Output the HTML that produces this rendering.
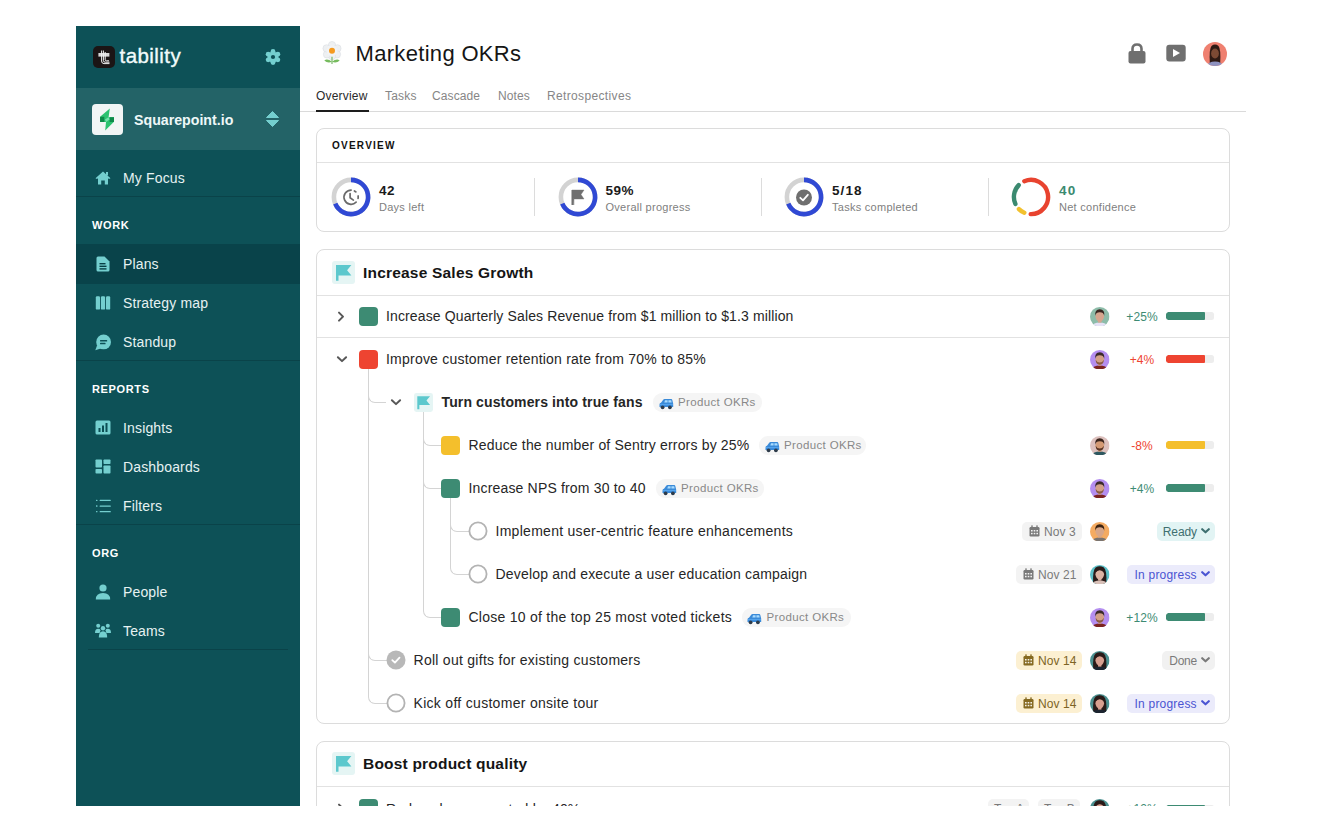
<!DOCTYPE html>
<html><head><meta charset="utf-8">
<style>
*{box-sizing:border-box;margin:0;padding:0}
html,body{width:1322px;height:819px;background:#fff;overflow:hidden;font-family:"Liberation Sans",sans-serif;color:#222}
.a{position:absolute}
.t{position:absolute;white-space:nowrap;line-height:1}
#clip{position:absolute;left:0;top:0;width:1322px;height:806px;overflow:hidden}
#side{position:absolute;left:76px;top:26px;width:224px;height:780px;background:#0d5157}
.nav{position:absolute;left:47px;font-size:14px;color:#e6f2f2;line-height:1;letter-spacing:0.15px;margin-top:-0.9px}
.lbl{position:absolute;left:16px;font-size:11px;font-weight:700;color:#fff;letter-spacing:0.65px;line-height:1;margin-top:-0.7px}
.ico{position:absolute;left:18px}
.div{position:absolute;left:0;width:224px;height:1px;background:#0a4349}
.card{position:absolute;left:316px;width:914px;border:1px solid #dcdcdc;border-radius:8px;background:#fff}
.hr{position:absolute;height:1px;background:#e2e2e2}
.rt{position:absolute;font-size:14px;color:#262626;line-height:1;white-space:nowrap;letter-spacing:0.15px}
.sq{position:absolute;width:19px;height:19px;border-radius:4px}
.pill{position:absolute;height:19px;border-radius:9px;background:#f5f5f5;font-size:11.5px;color:#888;line-height:19px;white-space:nowrap;padding-left:25px;letter-spacing:0.35px}
.pct{position:absolute;width:40px;text-align:center;font-size:12px;line-height:1}
.bar{position:absolute;left:1166px;width:48px;height:8px;border-radius:2.5px;background:#ededed;overflow:hidden}
.bar i{position:absolute;left:0;top:0;height:8px;width:39px;border-radius:2.5px 1px 1px 2.5px}
.av{position:absolute;left:1090px;width:20px;height:20px;border-radius:50%;overflow:hidden}
.date{position:absolute;height:19px;border-radius:5px;background:#f3f3f3;font-size:12px;color:#7a7a7a;line-height:19px;white-space:nowrap}
.st{position:absolute;height:19px;border-radius:5px;font-size:12px;line-height:19px;white-space:nowrap}
.line{position:absolute;border-color:#d4d4d4;border-style:solid;border-width:0}
</style></head><body>
<div id="clip">
<!-- SIDEBAR -->
<div id="side">
  <!-- logo -->
  <div class="a" style="left:16.5px;top:20px;width:22px;height:22px;border-radius:5px;background:#1b1515"></div>
  <svg class="a" style="left:16.5px;top:20px" width="22" height="22" viewBox="0 0 22 22">
    <rect x="5.4" y="7" width="11" height="3.6" fill="#d8d8d8"/>
    <path d="M8.6 4.5 V15 Q8.6 17.6 11 17.6 H16.5 M10.4 4.5 V14.5 Q10.4 16.2 12.2 16.2 H16.5 M12.2 6 V13.8 Q12.2 14.8 13.4 14.8 H16" stroke="#f0f0f0" stroke-width="1" fill="none"/>
  </svg>
  <div class="t" style="left:43.5px;top:20px;font-size:20.5px;color:#f2fbfb;letter-spacing:0.45px;-webkit-text-stroke:0.35px #f2fbfb">tability</div>
  <svg class="a" style="left:189px;top:23px" width="16" height="16" viewBox="0 0 16 16"><g fill="#74d0d0"><circle cx="8" cy="8" r="5.6"/><circle cx="8.00" cy="2.40" r="2.4"/><circle cx="12.85" cy="5.20" r="2.4"/><circle cx="12.85" cy="10.80" r="2.4"/><circle cx="8.00" cy="13.60" r="2.4"/><circle cx="3.15" cy="10.80" r="2.4"/><circle cx="3.15" cy="5.20" r="2.4"/></g><circle cx="8" cy="8" r="2.1" fill="#0d5157"/></svg>
  <!-- workspace -->
  <div class="a" style="left:0;top:62px;width:224px;height:62px;background:#236367"></div>
  <div class="a" style="left:16px;top:78px;width:30.5px;height:30.5px;border-radius:4px;background:#f1f5f5"></div>
  <svg class="a" style="left:16px;top:78px" width="31" height="31" viewBox="0 0 31 31">
    <path d="M17.8 4.4 L8.1 12.8 V18 H14 L13.2 26.4 L22 17.8 V13.2 H16.6 Z" fill="#2cc271"/>
    <rect x="8.1" y="12.8" width="4.2" height="5.2" fill="#0d8a4a"/>
    <rect x="17.6" y="13.2" width="4.4" height="4.8" fill="#0d8a4a"/>
    <path d="M16.6 13.2 L13 15.6 L14 18 L17.6 15.6Z" fill="#74e3ad"/>
  </svg>
  <div class="t" style="left:58px;top:87px;font-size:14.2px;font-weight:700;color:#eef8f8">Squarepoint.io</div>
  <svg class="a" style="left:190px;top:85px" width="13" height="16" viewBox="0 0 13 16">
    <path d="M6.5 0.5 L12.5 6.5 H0.5Z M6.5 15.5 L12.5 9.5 H0.5Z" fill="#74cfcf" stroke="#74cfcf" stroke-linejoin="round" stroke-width="1"/>
  </svg>
  <!-- nav -->
  <svg class="ico" style="left:19px;top:145px" width="16" height="14" viewBox="0 0 16 14">
    <path d="M8 0.5 L15.5 7.2 L14 8 L13 7.2 V13.5 H9.8 V9.5 H6.2 V13.5 H3 V7.2 L2 8 L0.5 7.2Z" fill="#74cfcf"/>
    <rect x="11" y="1" width="2" height="3.5" fill="#74cfcf"/>
  </svg>
  <div class="nav" style="top:146px">My Focus</div>
  <div class="div" style="top:170px"></div>
  <div class="lbl" style="top:195px">WORK</div>
  <div class="a" style="left:0;top:218px;width:224px;height:40px;background:#09434a"></div>
  <svg class="ico" style="left:20px;top:230px" width="14" height="16" viewBox="0 0 14 16">
    <path d="M2 0.5 H8.5 L13.5 5.5 V14 Q13.5 15.5 12 15.5 H2 Q0.5 15.5 0.5 14 V2 Q0.5 0.5 2 0.5Z" fill="#74cfcf"/>
    <rect x="3.5" y="7" width="6" height="1.4" fill="#083f45"/><rect x="3.5" y="9.6" width="7" height="1.4" fill="#083f45"/><rect x="3.5" y="12.2" width="7" height="1.4" fill="#083f45"/>
  </svg>
  <div class="nav" style="top:232px">Plans</div>
  <svg class="ico" style="left:19px;top:270px" width="16" height="14" viewBox="0 0 16 14">
    <rect x="0.8" y="0.3" width="4.2" height="13.3" rx="1.2" fill="#74cfcf"/><rect x="5.9" y="0.3" width="4.2" height="13.3" rx="1.2" fill="#74cfcf"/><rect x="11" y="0.3" width="4.2" height="13.3" rx="1.2" fill="#74cfcf"/>
  </svg>
  <div class="nav" style="top:271px">Strategy map</div>
  <svg class="ico" style="left:19px;top:307.5px" width="17" height="17" viewBox="0 0 17 17">
    <circle cx="8.6" cy="7.9" r="7.4" fill="#74cfcf"/><path d="M0.3 16.2 L2.2 11 L5.8 14.6Z" fill="#74cfcf"/>
    <rect x="5" y="6" width="7.2" height="1.5" rx="0.6" fill="#0d5157"/><rect x="5" y="8.8" width="5.6" height="1.5" rx="0.6" fill="#0d5157"/>
  </svg>
  <div class="nav" style="top:310px">Standup</div>
  <div class="div" style="top:334px"></div>
  <div class="lbl" style="top:359px">REPORTS</div>
  <svg class="ico" style="left:19px;top:394px" width="16" height="15" viewBox="0 0 16 15">
    <rect x="0.5" y="0.5" width="15" height="14" rx="1.5" fill="#74cfcf"/>
    <rect x="3.5" y="8" width="2" height="4" fill="#0c4e54"/><rect x="7" y="5.5" width="2" height="6.5" fill="#0c4e54"/><rect x="10.5" y="3" width="2" height="9" fill="#0c4e54"/>
  </svg>
  <div class="nav" style="top:396px">Insights</div>
  <svg class="ico" style="left:19px;top:433px" width="16" height="15" viewBox="0 0 16 15">
    <rect x="0.5" y="0.5" width="6.5" height="8" rx="0.8" fill="#74cfcf"/><rect x="0.5" y="10" width="6.5" height="4.5" rx="0.8" fill="#74cfcf"/>
    <rect x="8.5" y="0.5" width="7" height="4.5" rx="0.8" fill="#74cfcf"/><rect x="8.5" y="6.5" width="7" height="8" rx="0.8" fill="#74cfcf"/>
  </svg>
  <div class="nav" style="top:435px">Dashboards</div>
  <svg class="ico" style="left:19px;top:473px" width="16" height="14" viewBox="0 0 16 14">
    <g fill="#74cfcf"><rect x="1" y="0.7" width="1.5" height="1.4" rx="0.5"/><rect x="4.6" y="0.8" width="11.2" height="1.3" rx="0.5"/>
    <rect x="1" y="6.3" width="1.5" height="1.4" rx="0.5"/><rect x="4.6" y="6.4" width="11.2" height="1.3" rx="0.5"/>
    <rect x="1" y="11.9" width="1.5" height="1.4" rx="0.5"/><rect x="4.6" y="12" width="11.2" height="1.3" rx="0.5"/></g>
  </svg>
  <div class="nav" style="top:474px">Filters</div>
  <div class="div" style="top:498px"></div>
  <div class="lbl" style="top:523px">ORG</div>
  <svg class="ico" style="left:19px;top:558px" width="16" height="16" viewBox="0 0 16 16">
    <circle cx="8" cy="4" r="3.6" fill="#74cfcf"/><path d="M0.8 15.5 Q0.8 9 8 9 Q15.2 9 15.2 15.5Z" fill="#74cfcf"/>
  </svg>
  <div class="nav" style="top:560px">People</div>
  <svg class="ico" style="left:19px;top:597px" width="16" height="15" viewBox="0 0 16 15">
    <g fill="#74cfcf"><circle cx="3.2" cy="2.8" r="2"/><circle cx="12.8" cy="2.8" r="2"/><circle cx="8" cy="5.2" r="2.2"/>
    <path d="M0 10 Q0 5.8 3.2 5.8 Q5 5.8 5.6 7.2 L4.6 10Z"/><path d="M16 10 Q16 5.8 12.8 5.8 Q11 5.8 10.4 7.2 L11.4 10Z"/>
    <path d="M3.8 14.5 Q3.8 8.2 8 8.2 Q12.2 8.2 12.2 14.5Z"/></g>
  </svg>
  <div class="nav" style="top:599px">Teams</div>
  <div class="a" style="left:12px;top:623px;width:200px;height:1px;background:#0a4349"></div>
</div>

<!-- HEADER -->

<!-- HEADER -->
<svg class="a" style="left:321.5px;top:41px" width="20" height="24" viewBox="1 0 22 26" preserveAspectRatio="none">
  <g fill="#eef0f2" stroke="#d9dde2" stroke-width="0.6">
    <circle cx="12" cy="4.5" r="4"/><circle cx="18" cy="8" r="4"/><circle cx="17.5" cy="14.5" r="4"/>
    <circle cx="12" cy="16.5" r="4"/><circle cx="6.5" cy="14.5" r="4"/><circle cx="6" cy="8" r="4"/>
  </g>
  <circle cx="12" cy="10.5" r="6" fill="#f1f3f5"/>
  <circle cx="12" cy="10.5" r="3.3" fill="#f59a1f"/>
  <path d="M12 17 V25" stroke="#6db35a" stroke-width="1.2"/>
  <path d="M12 22.5 Q7 18.5 3.5 21 Q7 24.5 12 22.5Z M12 22.5 Q17 18.5 20.5 21 Q17 24.5 12 22.5Z" fill="#76bb5e"/>
</svg>
<div class="t" style="left:355.5px;top:42.7px;font-size:22px;color:#151515;letter-spacing:0.32px">Marketing OKRs</div>
<div class="t" style="left:316px;top:90px;font-size:12px;color:#2a2a2a;letter-spacing:0.2px">Overview</div>
<div class="t" style="left:385px;top:90px;font-size:12px;color:#868686;letter-spacing:0.2px">Tasks</div>
<div class="t" style="left:432px;top:90px;font-size:12px;color:#868686;letter-spacing:0.1px">Cascade</div>
<div class="t" style="left:498px;top:90px;font-size:12px;color:#868686;letter-spacing:0.1px">Notes</div>
<div class="t" style="left:547px;top:90px;font-size:12px;color:#868686;letter-spacing:0.35px">Retrospectives</div>
<div class="a" style="left:300px;top:111px;width:946px;height:1px;background:#dadada"></div>
<div class="a" style="left:316px;top:110px;width:53px;height:2px;background:#1d1d1d"></div>
<svg class="a" style="left:1128px;top:43px" width="18" height="21" viewBox="0 0 18 21">
  <path d="M4.5 9 V5.8 Q4.5 1.5 9 1.5 Q13.5 1.5 13.5 5.8 V9" stroke="#6f6f6f" stroke-width="2.6" fill="none"/>
  <rect x="0.5" y="8" width="17" height="12.5" rx="2" fill="#6f6f6f"/>
</svg>
<svg class="a" style="left:1166px;top:44px" width="20" height="18" viewBox="0 0 20 18">
  <rect x="0.3" y="0.8" width="19.4" height="16.6" rx="3" fill="#6f6f6f"/>
  <path d="M7 5 L14 9 L7 13Z" fill="#fff"/>
</svg>
<svg class="a" style="left:1203px;top:41.5px" width="24" height="24" viewBox="0 0 24 24">
  <defs><clipPath id="cav0"><circle cx="12" cy="12" r="12"/></clipPath></defs>
  <g clip-path="url(#cav0)">
  <rect width="24" height="24" fill="#ef8070"/>
  <path d="M6.8 21 Q6 7 8.5 4 Q12 1.2 15.5 4 Q18 7 17.2 21Z" fill="#2e1a14"/>
  <ellipse cx="12" cy="11.5" rx="3.9" ry="5" fill="#7c4a34"/>
  <path d="M3 26 Q4 19.5 12 19.5 Q20 19.5 21 26Z" fill="#8e92c0"/>
  </g>
</svg>
<!--BODY-->
<div class="card" style="top:128px;height:104px"></div>
<div class="t" style="left:332px;top:140.5px;font-size:10px;font-weight:700;color:#111;letter-spacing:1.25px">OVERVIEW</div>
<div class="hr" style="left:317px;top:161.5px;width:912px"></div>
<svg class="a" style="left:330px;top:176.3px" width="42" height="42" viewBox="0 0 42 42"><circle cx="21" cy="21" r="17.1" stroke="#d3d3d3" stroke-width="4.6" fill="none"/><path d="M21.00 3.90 A17.1 17.1 0 1 1 5.26 27.68" stroke="#3049d4" stroke-width="4.6" fill="none"/><path d="M26.12 26.22 A7.1 7.1 0 1 1 21.10 14.10" stroke="#6a6a6a" stroke-width="1.7" fill="none" stroke-linecap="round"/><path d="M24.43 14.93 A7.1 7.1 0 0 1 25.85 15.92" stroke="#6a6a6a" stroke-width="1.7" fill="none" stroke-linecap="round"/><path d="M28.09 19.97 A7.1 7.1 0 0 1 28.09 22.43" stroke="#6a6a6a" stroke-width="1.7" fill="none" stroke-linecap="round"/><path d="M20.1 17.6 V21.8 L23.4 24.1" stroke="#6a6a6a" stroke-width="1.7" fill="none" stroke-linecap="round" stroke-linejoin="round"/></svg>
<div class="t" style="left:379px;top:183.6px;font-size:13.5px;font-weight:700;color:#1a1a1a;letter-spacing:0.6px">42</div>
<div class="t" style="left:379px;top:202px;font-size:11px;color:#808080;letter-spacing:0.27px">Days left</div>
<svg class="a" style="left:556.5px;top:176.3px" width="42" height="42" viewBox="0 0 42 42"><circle cx="21" cy="21" r="17.1" stroke="#d3d3d3" stroke-width="4.6" fill="none"/><path d="M21.00 3.90 A17.1 17.1 0 1 1 5.26 27.68" stroke="#3049d4" stroke-width="4.6" fill="none"/><path d="M15 14 H27 L24 18.5 L27 23 H17 V29" fill="#6f6f6f" stroke="#6f6f6f" stroke-width="0.4"/><rect x="14.5" y="14" width="2.2" height="15" fill="#6f6f6f"/></svg>
<div class="t" style="left:605.5px;top:183.6px;font-size:13.5px;font-weight:700;color:#1a1a1a;letter-spacing:0.5px">59%</div>
<div class="t" style="left:605.5px;top:202px;font-size:11px;color:#808080;letter-spacing:0.27px">Overall progress</div>
<svg class="a" style="left:783px;top:176.3px" width="42" height="42" viewBox="0 0 42 42"><circle cx="21" cy="21" r="17.1" stroke="#d3d3d3" stroke-width="4.6" fill="none"/><path d="M21.00 3.90 A17.1 17.1 0 1 1 5.26 27.68" stroke="#3049d4" stroke-width="4.6" fill="none"/><circle cx="21" cy="21.5" r="8" fill="#6f6f6f"/><path d="M17.3 21.8 L20 24.3 L24.8 18.8" stroke="#fff" stroke-width="1.8" fill="none" stroke-linecap="round" stroke-linejoin="round"/></svg>
<div class="t" style="left:832px;top:183.6px;font-size:13.5px;font-weight:700;color:#1a1a1a;letter-spacing:1.1px">5/18</div>
<div class="t" style="left:832px;top:202px;font-size:11px;color:#808080;letter-spacing:0.27px">Tasks completed</div>
<svg class="a" style="left:1010px;top:176.3px" width="42" height="42" viewBox="0 0 42 42"><path d="M14.32 5.26 A17.1 17.1 0 1 1 20.70 38.10" stroke="#e8432f" stroke-width="4.4" fill="none" stroke-linecap="round"/><path d="M14.32 36.74 A17.1 17.1 0 0 1 8.91 33.09" stroke="#f2c12e" stroke-width="4.4" fill="none" stroke-linecap="round"/><path d="M5.38 27.96 A17.1 17.1 0 0 1 8.70 9.12" stroke="#3b8a70" stroke-width="4.4" fill="none" stroke-linecap="round"/></svg>
<div class="t" style="left:1059px;top:183.6px;font-size:13.5px;font-weight:700;color:#3b8a70;letter-spacing:1.2px">40</div>
<div class="t" style="left:1059px;top:202px;font-size:11px;color:#808080;letter-spacing:0.27px">Net confidence</div>
<div class="a" style="left:534px;top:178px;width:1px;height:38px;background:#dcdcdc"></div>
<div class="a" style="left:761px;top:178px;width:1px;height:38px;background:#dcdcdc"></div>
<div class="a" style="left:987.5px;top:178px;width:1px;height:38px;background:#dcdcdc"></div>
<div class="card" style="top:248.5px;height:475.5px"></div>
<svg class="a" style="left:332px;top:260.5px" width="23" height="23" viewBox="0 0 23 23"><rect width="23" height="23" rx="3" fill="#e5f5f4"/><path d="M4 4 H19.4 L15.1 9.2 L19.4 14.4 H6.5 V19.8 H4 Z" fill="#5cc8cd"/></svg>
<div class="t" style="left:363px;top:264.6px;font-size:15.5px;font-weight:700;color:#151515;letter-spacing:0.2px">Increase Sales Growth</div>
<div class="hr" style="left:317px;top:294.5px;width:912px"></div>
<div class="hr" style="left:317px;top:337px;width:912px"></div>
<div class="line" style="left:368px;top:368.4px;width:18px;height:34.5px;border-left-width:1px;border-bottom-width:1px;border-bottom-left-radius:7px"></div>
<div class="line" style="left:368px;top:368.4px;width:19px;height:292.5px;border-left-width:1px;border-bottom-width:1px;border-bottom-left-radius:7px"></div>
<div class="line" style="left:368px;top:368.4px;width:19px;height:335.5px;border-left-width:1px;border-bottom-width:1px;border-bottom-left-radius:7px"></div>
<div class="line" style="left:423px;top:411.4px;width:18px;height:34.5px;border-left-width:1px;border-bottom-width:1px;border-bottom-left-radius:7px"></div>
<div class="line" style="left:423px;top:411.4px;width:18px;height:77.5px;border-left-width:1px;border-bottom-width:1px;border-bottom-left-radius:7px"></div>
<div class="line" style="left:423px;top:411.4px;width:18px;height:206.5px;border-left-width:1px;border-bottom-width:1px;border-bottom-left-radius:7px"></div>
<div class="line" style="left:450px;top:497.4px;width:19px;height:34.5px;border-left-width:1px;border-bottom-width:1px;border-bottom-left-radius:7px"></div>
<div class="line" style="left:450px;top:497.4px;width:19px;height:77.5px;border-left-width:1px;border-bottom-width:1px;border-bottom-left-radius:7px"></div>
<svg class="a" style="left:337px;top:310.9px" width="8" height="12" viewBox="0 0 8 12"><path d="M2 1.6 L6 5.6 L2 9.6" stroke="#575757" stroke-width="2" fill="none" stroke-linecap="round" stroke-linejoin="round"/></svg>
<div class="sq" style="left:359px;top:306.9px;background:#3d8b73"></div>
<div class="rt" style="left:386px;top:309.15px;letter-spacing:0.13px">Increase Quarterly Sales Revenue from $1 million to $1.3 million</div>
<svg class="a" style="left:1090.25px;top:306.65px" width="19.5" height="19.5" viewBox="0 0 20 20"><defs><clipPath id="c1100_3164"><circle cx="10" cy="10" r="10"/></clipPath></defs><g clip-path="url(#c1100_3164)"><rect width="20" height="20" fill="#8dbca9"/><path d="M1.5 21 Q2 16 10 15.8 Q18 16 18.5 21Z" fill="#e6e2f6"/><rect x="8.3" y="12" width="3.4" height="4" fill="#d6a58e"/><ellipse cx="10" cy="9.6" rx="4.4" ry="5.4" fill="#d6a58e"/><path d="M5.4 9 Q4.6 2.4 10 2.2 Q15.4 2.4 14.6 9 Q13.8 5.4 10 5.5 Q6.2 5.4 5.4 9Z" fill="#3a2620"/></g></svg>
<div class="pct" style="left:1122px;top:310.59999999999997px;color:#3d8b73;letter-spacing:0.1px">+25%</div>
<div class="bar" style="top:312.4px"><i style="background:#3d8b73"></i></div>
<svg class="a" style="left:335.5px;top:355.4px" width="12" height="8" viewBox="0 0 12 8"><path d="M1.9 2.2 L6 6.1 L10.1 2.2" stroke="#575757" stroke-width="2" fill="none" stroke-linecap="round" stroke-linejoin="round"/></svg>
<div class="sq" style="left:359px;top:349.9px;background:#ee4431"></div>
<div class="rt" style="left:386px;top:352.15px;letter-spacing:0.22px">Improve customer retention rate from 70% to 85%</div>
<svg class="a" style="left:1090.25px;top:349.65px" width="19.5" height="19.5" viewBox="0 0 20 20"><defs><clipPath id="c1100_3594"><circle cx="10" cy="10" r="10"/></clipPath></defs><g clip-path="url(#c1100_3594)"><rect width="20" height="20" fill="#b48ef0"/><path d="M1.5 21 Q2 16 10 15.8 Q18 16 18.5 21Z" fill="#7c2420"/><rect x="8.3" y="12" width="3.4" height="4" fill="#d2a088"/><ellipse cx="10" cy="9.6" rx="4.4" ry="5.4" fill="#d2a088"/><path d="M5.8 10 Q6 15 10 15.1 Q14 15 14.2 10 Q13 12.8 10 12.8 Q7 12.8 5.8 10Z" fill="#8a5a48"/><path d="M5.4 9 Q4.6 2.4 10 2.2 Q15.4 2.4 14.6 9 Q13.8 5.4 10 5.5 Q6.2 5.4 5.4 9Z" fill="#3a2a28"/></g></svg>
<div class="pct" style="left:1122px;top:353.59999999999997px;color:#ee4431;letter-spacing:0.1px">+4%</div>
<div class="bar" style="top:355.4px"><i style="background:#ee4431"></i></div>
<svg class="a" style="left:390px;top:398.4px" width="12" height="8" viewBox="0 0 12 8"><path d="M1.9 2.2 L6 6.1 L10.1 2.2" stroke="#575757" stroke-width="2" fill="none" stroke-linecap="round" stroke-linejoin="round"/></svg>
<svg class="a" style="left:413.5px;top:392.9px" width="19" height="19" viewBox="0 0 23 23"><rect width="23" height="23" rx="3" fill="#e5f5f4"/><path d="M4 4 H19.4 L15.1 9.2 L19.4 14.4 H6.5 V19.8 H4 Z" fill="#5cc8cd"/></svg>
<div class="rt" style="left:441.5px;top:395.15px;font-weight:700;letter-spacing:0.13px">Turn customers into true fans</div>
<div class="pill" style="left:653px;top:392.9px;width:109px">Product OKRs</div><svg class="a" style="left:658.5px;top:398.4px" width="15" height="12" viewBox="0 0 15 12"><path d="M0.5 9 V6.6 Q0.5 5 2 4.8 L4.2 1.8 Q4.7 1 5.6 1 H12.2 Q13.1 1 13.3 2 L13.9 4.6 Q14.2 5.2 14.2 6.2 V9 Z" fill="#3a8ad8"/><path d="M5.3 4.6 L6 2.2 H8.6 V4.6Z M9.4 2.2 H12.2 L12.7 4.6 H9.4Z" fill="#a9dcff"/><rect x="1" y="6.2" width="12.8" height="0.9" fill="#5aaaf0"/><circle cx="3.6" cy="9.3" r="1.9" fill="#2d3b4a"/><circle cx="10.9" cy="9.3" r="1.9" fill="#2d3b4a"/></svg>
<div class="sq" style="left:441px;top:435.9px;background:#f4bf2c"></div>
<div class="rt" style="left:468.5px;top:438.15px;letter-spacing:0.17px">Reduce the number of Sentry errors by 25%</div>
<div class="pill" style="left:759px;top:435.9px;width:107px">Product OKRs</div><svg class="a" style="left:764.5px;top:441.4px" width="15" height="12" viewBox="0 0 15 12"><path d="M0.5 9 V6.6 Q0.5 5 2 4.8 L4.2 1.8 Q4.7 1 5.6 1 H12.2 Q13.1 1 13.3 2 L13.9 4.6 Q14.2 5.2 14.2 6.2 V9 Z" fill="#3a8ad8"/><path d="M5.3 4.6 L6 2.2 H8.6 V4.6Z M9.4 2.2 H12.2 L12.7 4.6 H9.4Z" fill="#a9dcff"/><rect x="1" y="6.2" width="12.8" height="0.9" fill="#5aaaf0"/><circle cx="3.6" cy="9.3" r="1.9" fill="#2d3b4a"/><circle cx="10.9" cy="9.3" r="1.9" fill="#2d3b4a"/></svg>
<svg class="a" style="left:1090.25px;top:435.65px" width="19.5" height="19.5" viewBox="0 0 20 20"><defs><clipPath id="c1100_4454"><circle cx="10" cy="10" r="10"/></clipPath></defs><g clip-path="url(#c1100_4454)"><rect width="20" height="20" fill="#dcc0bd"/><path d="M1.5 21 Q2 16 10 15.8 Q18 16 18.5 21Z" fill="#2e5860"/><rect x="8.3" y="12" width="3.4" height="4" fill="#d49a74"/><ellipse cx="10" cy="9.6" rx="4.4" ry="5.4" fill="#d49a74"/><path d="M5.8 10 Q6 15 10 15.1 Q14 15 14.2 10 Q13 12.8 10 12.8 Q7 12.8 5.8 10Z" fill="#5a3424"/><path d="M5.4 9 Q4.6 2.4 10 2.2 Q15.4 2.4 14.6 9 Q13.8 5.4 10 5.5 Q6.2 5.4 5.4 9Z" fill="#3a241c"/></g></svg>
<div class="pct" style="left:1122px;top:439.59999999999997px;color:#ee4431;letter-spacing:0.1px">-8%</div>
<div class="bar" style="top:441.4px"><i style="background:#f4bf2c"></i></div>
<div class="sq" style="left:441px;top:478.9px;background:#3d8b73"></div>
<div class="rt" style="left:468.5px;top:481.15px;letter-spacing:0.17px">Increase NPS from 30 to 40</div>
<div class="pill" style="left:656px;top:478.9px;width:108px">Product OKRs</div><svg class="a" style="left:661.5px;top:484.4px" width="15" height="12" viewBox="0 0 15 12"><path d="M0.5 9 V6.6 Q0.5 5 2 4.8 L4.2 1.8 Q4.7 1 5.6 1 H12.2 Q13.1 1 13.3 2 L13.9 4.6 Q14.2 5.2 14.2 6.2 V9 Z" fill="#3a8ad8"/><path d="M5.3 4.6 L6 2.2 H8.6 V4.6Z M9.4 2.2 H12.2 L12.7 4.6 H9.4Z" fill="#a9dcff"/><rect x="1" y="6.2" width="12.8" height="0.9" fill="#5aaaf0"/><circle cx="3.6" cy="9.3" r="1.9" fill="#2d3b4a"/><circle cx="10.9" cy="9.3" r="1.9" fill="#2d3b4a"/></svg>
<svg class="a" style="left:1090.25px;top:478.65px" width="19.5" height="19.5" viewBox="0 0 20 20"><defs><clipPath id="c1100_4884"><circle cx="10" cy="10" r="10"/></clipPath></defs><g clip-path="url(#c1100_4884)"><rect width="20" height="20" fill="#b48ef0"/><path d="M1.5 21 Q2 16 10 15.8 Q18 16 18.5 21Z" fill="#7c2420"/><rect x="8.3" y="12" width="3.4" height="4" fill="#d2a088"/><ellipse cx="10" cy="9.6" rx="4.4" ry="5.4" fill="#d2a088"/><path d="M5.8 10 Q6 15 10 15.1 Q14 15 14.2 10 Q13 12.8 10 12.8 Q7 12.8 5.8 10Z" fill="#8a5a48"/><path d="M5.4 9 Q4.6 2.4 10 2.2 Q15.4 2.4 14.6 9 Q13.8 5.4 10 5.5 Q6.2 5.4 5.4 9Z" fill="#3a2a28"/></g></svg>
<div class="pct" style="left:1122px;top:482.59999999999997px;color:#3d8b73;letter-spacing:0.1px">+4%</div>
<div class="bar" style="top:484.4px"><i style="background:#3d8b73"></i></div>
<svg class="a" style="left:467.5px;top:521.4px" width="20" height="20" viewBox="0 0 20 20"><circle cx="10" cy="10" r="8.6" stroke="#b3b3b3" stroke-width="1.8" fill="#fff"/></svg>
<div class="rt" style="left:495.5px;top:524.15px;letter-spacing:0.28px">Implement user-centric feature enhancements</div>
<div class="date" style="left:1022px;top:521.9px;width:60px;background:#f3f3f3"></div><svg class="a" style="left:1028.5px;top:525.4px" width="11" height="12" viewBox="0 0 11 12"><rect x="0.5" y="2" width="10" height="9.5" rx="1.2" fill="#7a7a7a"/><rect x="2.3" y="0.3" width="1.4" height="3" rx="0.5" fill="#7a7a7a"/><rect x="7.3" y="0.3" width="1.4" height="3" rx="0.5" fill="#7a7a7a"/><g fill="#fff" opacity="0.9"><rect x="2" y="5" width="1.6" height="1.5"/><rect x="4.7" y="5" width="1.6" height="1.5"/><rect x="7.4" y="5" width="1.6" height="1.5"/><rect x="2" y="7.8" width="1.6" height="1.5"/><rect x="4.7" y="7.8" width="1.6" height="1.5"/><rect x="7.4" y="7.8" width="1.6" height="1.5"/></g></svg><div class="t" style="left:1044px;top:525.6px;font-size:12px;color:#7a7a7a;letter-spacing:0.08px">Nov 3</div>
<svg class="a" style="left:1090.25px;top:521.65px" width="19.5" height="19.5" viewBox="0 0 20 20"><defs><clipPath id="c1100_5314"><circle cx="10" cy="10" r="10"/></clipPath></defs><g clip-path="url(#c1100_5314)"><rect width="20" height="20" fill="#f4ab62"/><path d="M1.5 21 Q2 16 10 15.8 Q18 16 18.5 21Z" fill="#7a7470"/><rect x="8.3" y="12" width="3.4" height="4" fill="#d8a688"/><ellipse cx="10" cy="9.6" rx="4.4" ry="5.4" fill="#d8a688"/><path d="M5.4 9 Q4.6 2.4 10 2.2 Q15.4 2.4 14.6 9 Q13.8 5.4 10 5.5 Q6.2 5.4 5.4 9Z" fill="#3a2212"/></g></svg>
<div class="st" style="left:1156.5px;top:521.9px;width:58.5px;background:#e2f4f4"></div><div class="t" style="left:1156.5px;width:40.299999999999955px;text-align:right;top:525.6px;font-size:12px;color:#3e6f70;letter-spacing:-0.15px">Ready</div><svg class="a" style="left:1201px;top:528.4px" width="9" height="6" viewBox="0 0 9 6"><path d="M1.2 1.2 L4.5 4.3 L7.8 1.2" stroke="#3e6f70" stroke-width="2.1" fill="none" stroke-linecap="round" stroke-linejoin="round"/></svg>
<svg class="a" style="left:467.5px;top:564.4px" width="20" height="20" viewBox="0 0 20 20"><circle cx="10" cy="10" r="8.6" stroke="#b3b3b3" stroke-width="1.8" fill="#fff"/></svg>
<div class="rt" style="left:495.5px;top:567.15px;letter-spacing:0.18px">Develop and execute a user education campaign</div>
<div class="date" style="left:1016px;top:564.9px;width:66px;background:#f3f3f3"></div><svg class="a" style="left:1022.5px;top:568.4px" width="11" height="12" viewBox="0 0 11 12"><rect x="0.5" y="2" width="10" height="9.5" rx="1.2" fill="#7a7a7a"/><rect x="2.3" y="0.3" width="1.4" height="3" rx="0.5" fill="#7a7a7a"/><rect x="7.3" y="0.3" width="1.4" height="3" rx="0.5" fill="#7a7a7a"/><g fill="#fff" opacity="0.9"><rect x="2" y="5" width="1.6" height="1.5"/><rect x="4.7" y="5" width="1.6" height="1.5"/><rect x="7.4" y="5" width="1.6" height="1.5"/><rect x="2" y="7.8" width="1.6" height="1.5"/><rect x="4.7" y="7.8" width="1.6" height="1.5"/><rect x="7.4" y="7.8" width="1.6" height="1.5"/></g></svg><div class="t" style="left:1038px;top:568.6px;font-size:12px;color:#7a7a7a;letter-spacing:0.08px">Nov 21</div>
<svg class="a" style="left:1090.25px;top:564.65px" width="19.5" height="19.5" viewBox="0 0 20 20"><defs><clipPath id="c1100_5744"><circle cx="10" cy="10" r="10"/></clipPath></defs><g clip-path="url(#c1100_5744)"><rect width="20" height="20" fill="#5cc0c8"/><path d="M3.2 19 Q2.6 5 5.8 2.6 Q10 0 14.2 2.6 Q17.4 5 16.8 19Z" fill="#2a1c1a"/><path d="M1.5 21 Q2 16 10 15.8 Q18 16 18.5 21Z" fill="#d8c0b8"/><rect x="8.3" y="12" width="3.4" height="4" fill="#dcb4a4"/><ellipse cx="10" cy="9.6" rx="4.4" ry="5.4" fill="#dcb4a4"/><path d="M5.6 8 Q5.8 3 10 2.8 Q14.2 3 14.4 8 Q12.4 5.2 10 5.3 Q7.6 5.2 5.6 8Z" fill="#2a1c1a"/></g></svg>
<div class="st" style="left:1127px;top:564.9px;width:88px;background:#ebebfb"></div><div class="t" style="left:1127px;width:69.79999999999995px;text-align:right;top:568.6px;font-size:12px;color:#4a54d2;letter-spacing:0.2px">In progress</div><svg class="a" style="left:1201px;top:571.4px" width="9" height="6" viewBox="0 0 9 6"><path d="M1.2 1.2 L4.5 4.3 L7.8 1.2" stroke="#4a54d2" stroke-width="2.1" fill="none" stroke-linecap="round" stroke-linejoin="round"/></svg>
<div class="sq" style="left:441px;top:607.9px;background:#3d8b73"></div>
<div class="rt" style="left:468.5px;top:610.15px;letter-spacing:0.26px">Close 10 of the top 25 most voted tickets</div>
<div class="pill" style="left:741.5px;top:607.9px;width:109.5px">Product OKRs</div><svg class="a" style="left:747.0px;top:613.4px" width="15" height="12" viewBox="0 0 15 12"><path d="M0.5 9 V6.6 Q0.5 5 2 4.8 L4.2 1.8 Q4.7 1 5.6 1 H12.2 Q13.1 1 13.3 2 L13.9 4.6 Q14.2 5.2 14.2 6.2 V9 Z" fill="#3a8ad8"/><path d="M5.3 4.6 L6 2.2 H8.6 V4.6Z M9.4 2.2 H12.2 L12.7 4.6 H9.4Z" fill="#a9dcff"/><rect x="1" y="6.2" width="12.8" height="0.9" fill="#5aaaf0"/><circle cx="3.6" cy="9.3" r="1.9" fill="#2d3b4a"/><circle cx="10.9" cy="9.3" r="1.9" fill="#2d3b4a"/></svg>
<svg class="a" style="left:1090.25px;top:607.65px" width="19.5" height="19.5" viewBox="0 0 20 20"><defs><clipPath id="c1100_6174"><circle cx="10" cy="10" r="10"/></clipPath></defs><g clip-path="url(#c1100_6174)"><rect width="20" height="20" fill="#b48ef0"/><path d="M1.5 21 Q2 16 10 15.8 Q18 16 18.5 21Z" fill="#7c2420"/><rect x="8.3" y="12" width="3.4" height="4" fill="#d2a088"/><ellipse cx="10" cy="9.6" rx="4.4" ry="5.4" fill="#d2a088"/><path d="M5.8 10 Q6 15 10 15.1 Q14 15 14.2 10 Q13 12.8 10 12.8 Q7 12.8 5.8 10Z" fill="#8a5a48"/><path d="M5.4 9 Q4.6 2.4 10 2.2 Q15.4 2.4 14.6 9 Q13.8 5.4 10 5.5 Q6.2 5.4 5.4 9Z" fill="#3a2a28"/></g></svg>
<div class="pct" style="left:1122px;top:611.6px;color:#3d8b73;letter-spacing:0.1px">+12%</div>
<div class="bar" style="top:613.4px"><i style="background:#3d8b73"></i></div>
<svg class="a" style="left:386px;top:650.4px" width="20" height="20" viewBox="0 0 20 20"><circle cx="10" cy="10" r="9.5" fill="#b8b8b8"/><path d="M6.3 10.2 L8.9 12.6 L13.5 7.6" stroke="#fff" stroke-width="1.8" fill="none" stroke-linecap="round" stroke-linejoin="round"/></svg>
<div class="rt" style="left:413.5px;top:653.15px;letter-spacing:0.27px">Roll out gifts for existing customers</div>
<div class="date" style="left:1016px;top:650.9px;width:66px;background:#fcf0d2"></div><svg class="a" style="left:1022.5px;top:654.4px" width="11" height="12" viewBox="0 0 11 12"><rect x="0.5" y="2" width="10" height="9.5" rx="1.2" fill="#866a22"/><rect x="2.3" y="0.3" width="1.4" height="3" rx="0.5" fill="#866a22"/><rect x="7.3" y="0.3" width="1.4" height="3" rx="0.5" fill="#866a22"/><g fill="#fff" opacity="0.9"><rect x="2" y="5" width="1.6" height="1.5"/><rect x="4.7" y="5" width="1.6" height="1.5"/><rect x="7.4" y="5" width="1.6" height="1.5"/><rect x="2" y="7.8" width="1.6" height="1.5"/><rect x="4.7" y="7.8" width="1.6" height="1.5"/><rect x="7.4" y="7.8" width="1.6" height="1.5"/></g></svg><div class="t" style="left:1038px;top:654.6px;font-size:12px;color:#7d6424;letter-spacing:0.08px">Nov 14</div>
<svg class="a" style="left:1090.25px;top:650.65px" width="19.5" height="19.5" viewBox="0 0 20 20"><defs><clipPath id="c1100_6604"><circle cx="10" cy="10" r="10"/></clipPath></defs><g clip-path="url(#c1100_6604)"><rect width="20" height="20" fill="#4a8f8f"/><path d="M3.2 19 Q2.6 5 5.8 2.6 Q10 0 14.2 2.6 Q17.4 5 16.8 19Z" fill="#2a1a18"/><path d="M1.5 21 Q2 16 10 15.8 Q18 16 18.5 21Z" fill="#1c2430"/><rect x="8.3" y="12" width="3.4" height="4" fill="#d8a090"/><ellipse cx="10" cy="9.6" rx="4.4" ry="5.4" fill="#d8a090"/><path d="M5.6 8 Q5.8 3 10 2.8 Q14.2 3 14.4 8 Q12.4 5.2 10 5.3 Q7.6 5.2 5.6 8Z" fill="#2a1a18"/></g></svg>
<div class="st" style="left:1162px;top:650.9px;width:53px;background:#f1f1f1"></div><div class="t" style="left:1162px;width:34.799999999999955px;text-align:right;top:654.6px;font-size:12px;color:#7a7a7a;letter-spacing:-0.3px">Done</div><svg class="a" style="left:1201px;top:657.4px" width="9" height="6" viewBox="0 0 9 6"><path d="M1.2 1.2 L4.5 4.3 L7.8 1.2" stroke="#7a7a7a" stroke-width="2.1" fill="none" stroke-linecap="round" stroke-linejoin="round"/></svg>
<svg class="a" style="left:386px;top:693.4px" width="20" height="20" viewBox="0 0 20 20"><circle cx="10" cy="10" r="8.6" stroke="#b3b3b3" stroke-width="1.8" fill="#fff"/></svg>
<div class="rt" style="left:413.5px;top:696.15px;letter-spacing:0.3px">Kick off customer onsite tour</div>
<div class="date" style="left:1016px;top:693.9px;width:66px;background:#fcf0d2"></div><svg class="a" style="left:1022.5px;top:697.4px" width="11" height="12" viewBox="0 0 11 12"><rect x="0.5" y="2" width="10" height="9.5" rx="1.2" fill="#866a22"/><rect x="2.3" y="0.3" width="1.4" height="3" rx="0.5" fill="#866a22"/><rect x="7.3" y="0.3" width="1.4" height="3" rx="0.5" fill="#866a22"/><g fill="#fff" opacity="0.9"><rect x="2" y="5" width="1.6" height="1.5"/><rect x="4.7" y="5" width="1.6" height="1.5"/><rect x="7.4" y="5" width="1.6" height="1.5"/><rect x="2" y="7.8" width="1.6" height="1.5"/><rect x="4.7" y="7.8" width="1.6" height="1.5"/><rect x="7.4" y="7.8" width="1.6" height="1.5"/></g></svg><div class="t" style="left:1038px;top:697.6px;font-size:12px;color:#7d6424;letter-spacing:0.08px">Nov 14</div>
<svg class="a" style="left:1090.25px;top:693.65px" width="19.5" height="19.5" viewBox="0 0 20 20"><defs><clipPath id="c1100_7034"><circle cx="10" cy="10" r="10"/></clipPath></defs><g clip-path="url(#c1100_7034)"><rect width="20" height="20" fill="#4a8f8f"/><path d="M3.2 19 Q2.6 5 5.8 2.6 Q10 0 14.2 2.6 Q17.4 5 16.8 19Z" fill="#2a1a18"/><path d="M1.5 21 Q2 16 10 15.8 Q18 16 18.5 21Z" fill="#1c2430"/><rect x="8.3" y="12" width="3.4" height="4" fill="#d8a090"/><ellipse cx="10" cy="9.6" rx="4.4" ry="5.4" fill="#d8a090"/><path d="M5.6 8 Q5.8 3 10 2.8 Q14.2 3 14.4 8 Q12.4 5.2 10 5.3 Q7.6 5.2 5.6 8Z" fill="#2a1a18"/></g></svg>
<div class="st" style="left:1127px;top:693.9px;width:88px;background:#ebebfb"></div><div class="t" style="left:1127px;width:69.79999999999995px;text-align:right;top:697.6px;font-size:12px;color:#4a54d2;letter-spacing:0.2px">In progress</div><svg class="a" style="left:1201px;top:700.4px" width="9" height="6" viewBox="0 0 9 6"><path d="M1.2 1.2 L4.5 4.3 L7.8 1.2" stroke="#4a54d2" stroke-width="2.1" fill="none" stroke-linecap="round" stroke-linejoin="round"/></svg>
<div class="card" style="top:741px;height:120px"></div>
<svg class="a" style="left:332px;top:752px" width="23" height="23" viewBox="0 0 23 23"><rect width="23" height="23" rx="3" fill="#e5f5f4"/><path d="M4 4 H19.4 L15.1 9.2 L19.4 14.4 H6.5 V19.8 H4 Z" fill="#5cc8cd"/></svg>
<div class="t" style="left:363px;top:756px;font-size:15.5px;font-weight:700;color:#151515;letter-spacing:0.2px">Boost product quality</div>
<div class="hr" style="left:317px;top:786px;width:912px"></div>
<svg class="a" style="left:337px;top:803.0px" width="8" height="12" viewBox="0 0 8 12"><path d="M2 1.6 L6 5.6 L2 9.6" stroke="#575757" stroke-width="2" fill="none" stroke-linecap="round" stroke-linejoin="round"/></svg>
<div class="sq" style="left:359px;top:799.0px;background:#3d8b73"></div>
<div class="rt" style="left:386px;top:802.25px;letter-spacing:0.2px">Reduce bugs reported by 40%</div>
<div class="date" style="left:988px;top:799.0px;width:41px"></div><div class="t" style="left:994px;top:802.7px;font-size:12px;color:#7a7a7a">Tag A</div>
<div class="date" style="left:1038px;top:799.0px;width:42px"></div><div class="t" style="left:1044px;top:802.7px;font-size:12px;color:#7a7a7a">Tag B</div>
<svg class="a" style="left:1090.25px;top:798.75px" width="19.5" height="19.5" viewBox="0 0 20 20"><defs><clipPath id="c1100_8085"><circle cx="10" cy="10" r="10"/></clipPath></defs><g clip-path="url(#c1100_8085)"><rect width="20" height="20" fill="#4a8f8f"/><path d="M3.2 19 Q2.6 5 5.8 2.6 Q10 0 14.2 2.6 Q17.4 5 16.8 19Z" fill="#2a1a18"/><path d="M1.5 21 Q2 16 10 15.8 Q18 16 18.5 21Z" fill="#1c2430"/><rect x="8.3" y="12" width="3.4" height="4" fill="#d8a090"/><ellipse cx="10" cy="9.6" rx="4.4" ry="5.4" fill="#d8a090"/><path d="M5.6 8 Q5.8 3 10 2.8 Q14.2 3 14.4 8 Q12.4 5.2 10 5.3 Q7.6 5.2 5.6 8Z" fill="#2a1a18"/></g></svg>
<div class="pct" style="left:1122px;top:802.7px;color:#3d8b73;letter-spacing:0.1px">+12%</div>
<div class="bar" style="top:804.5px"><i style="background:#3d8b73"></i></div>
<!--/BODY-->
</div>
</body></html>
